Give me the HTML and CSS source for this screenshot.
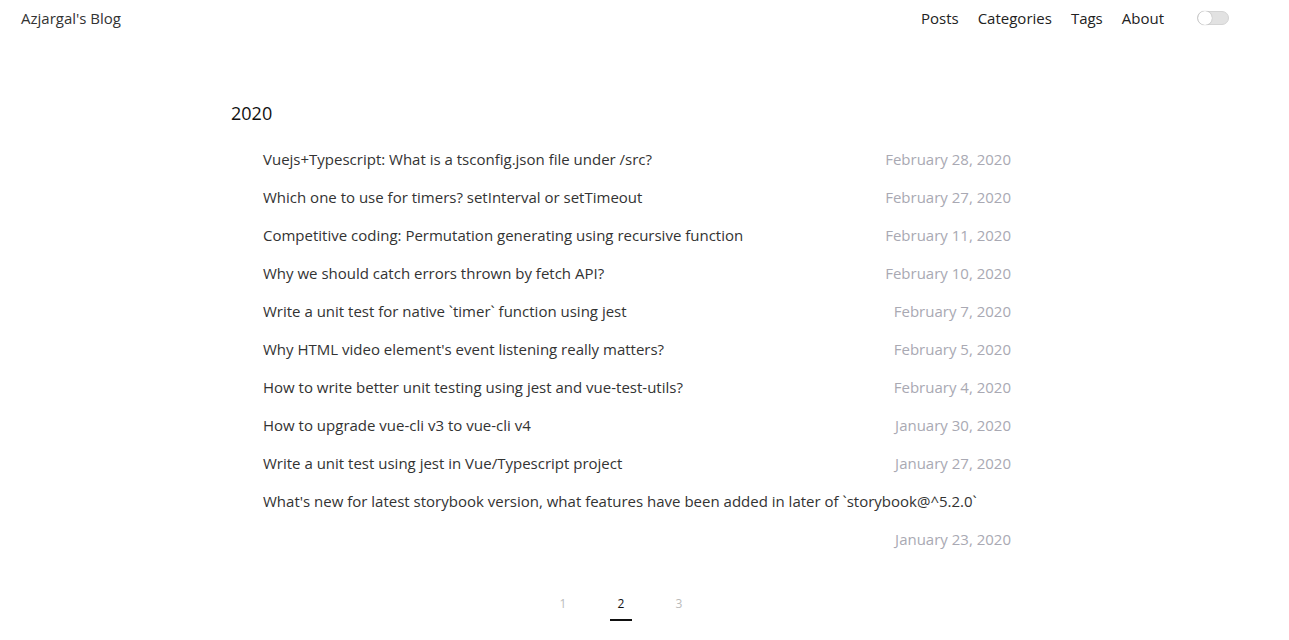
FILE: index.html
```html
<!DOCTYPE html>
<html lang="en">
<head>
<meta charset="utf-8">
<title>Azjargal's Blog</title>
<link rel="stylesheet" href="styles.css">
</head>
<body>
<header class="header">
  <a class="logo" href="#">Azjargal's Blog</a>
  <nav class="nav">
    <a href="#">Posts</a>
    <a href="#">Categories</a>
    <a href="#">Tags</a>
    <a href="#">About</a>
    <span class="toggle"><span class="knob"></span></span>
  </nav>
</header>
<main class="main">
  <h2 class="year">2020</h2>
  <ul class="list">
    <li class="item"><a class="title" href="#">Vuejs+Typescript: What is a tsconfig.json file under /src?</a><span class="date">February 28, 2020</span></li>
    <li class="item"><a class="title" href="#">Which one to use for timers? setInterval or setTimeout</a><span class="date">February 27, 2020</span></li>
    <li class="item"><a class="title" href="#">Competitive coding: Permutation generating using recursive function</a><span class="date">February 11, 2020</span></li>
    <li class="item"><a class="title" href="#">Why we should catch errors thrown by fetch API?</a><span class="date">February 10, 2020</span></li>
    <li class="item"><a class="title" href="#">Write a unit test for native `timer` function using jest</a><span class="date">February 7, 2020</span></li>
    <li class="item"><a class="title" href="#">Why HTML video element's event listening really matters?</a><span class="date">February 5, 2020</span></li>
    <li class="item"><a class="title" href="#">How to write better unit testing using jest and vue-test-utils?</a><span class="date">February 4, 2020</span></li>
    <li class="item"><a class="title" href="#">How to upgrade vue-cli v3 to vue-cli v4</a><span class="date">January 30, 2020</span></li>
    <li class="item"><a class="title" href="#">Write a unit test using jest in Vue/Typescript project</a><span class="date">January 27, 2020</span></li>
    <li class="item"><a class="title" href="#">What's new for latest storybook version, what features have been added in later of `storybook@^5.2.0`</a><span class="date">January 23, 2020</span></li>
  </ul>
  <nav class="pager">
    <a href="#" class="page">1</a>
    <a href="#" class="page current">2</a>
    <a href="#" class="page">3</a>
  </nav>
</main>
</body>
</html>
```
FILE: styles.css
```css
* { box-sizing: border-box; }
html, body { margin: 0; padding: 0; background: #fff; }
body {
  font-family: "Open Sans", "Noto Sans", sans-serif;
  color: #222;
  font-size: 15px;
}
a { color: inherit; text-decoration: none; }

.header {
  display: flex;
  align-items: center;
  justify-content: space-between;
  height: 35px;
  padding: 0 60px 0 21px;
}
.logo { font-size: 15px; color: #333; }
.nav { display: flex; align-items: center; }
.nav a { font-size: 15px; color: #222; margin-left: 19px; }
.toggle {
  margin-left: 33px;
  width: 32px;
  height: 14px;
  border-radius: 7px;
  background: #e2e2e2;
  border: 1px solid #d4d4d4;
  position: relative;
  display: inline-block;
}
.knob {
  position: absolute;
  left: 0;
  top: -1px;
  width: 14px;
  height: 14px;
  border-radius: 50%;
  background: #fff;
  box-shadow: 0 0 1px rgba(0,0,0,.4);
}

.main {
  width: 780px;
  margin: 0 0 0 231px;
  padding-top: 66px;
}
.year {
  font-size: 18px;
  font-weight: 400;
  margin: 0 0 15px 0;
  color: #111;
}
.list { list-style: none; margin: 0; padding: 0 0 0 32px; }
.item {
  display: flex;
  flex-wrap: wrap;
  justify-content: space-between;
  line-height: 38px;
}
.title { color: #333; }
.date { color: #a9a9b3; margin-left: auto; }

.pager {
  display: flex;
  justify-content: center;
  gap: 36px;
  margin-top: 37px;
}
.page {
  font-size: 12px;
  color: #bbb;
  width: 22px;
  text-align: center;
  padding-bottom: 7px;
}
.page.current { color: #111; border-bottom: 2px solid #111; }
```
